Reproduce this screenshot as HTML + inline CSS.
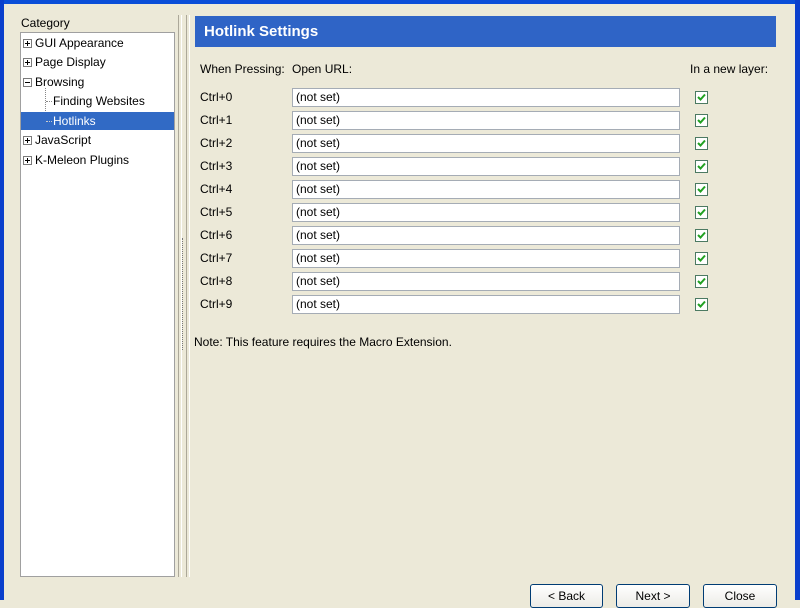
<!DOCTYPE html>
<html><head><style>
body{margin:0;width:800px;height:600px;overflow:hidden;background:#ECE9D8;font-family:"Liberation Sans",sans-serif;font-size:12px;color:#000;position:relative}
.a{position:absolute}
.inp{position:absolute;left:292px;width:388px;border:1px solid #A5ACB5;background:#fff;line-height:17px;padding-left:3px;box-sizing:border-box;height:19px;}
.cb{position:absolute;left:695px;width:13px;height:13px;border:1px solid #4C7A62;background:#fff;box-sizing:border-box}
.cb svg{position:absolute;left:1px;top:1px}
.lbl{position:absolute;left:200px}
.pm{position:absolute;left:23px;width:9px;height:9px;border:1px solid #7a7a7a;box-sizing:border-box;background:#fff}
.pm:before{content:"";position:absolute;left:1px;top:3px;width:5px;height:1px;background:#000}
.pm.p:after{content:"";position:absolute;left:3px;top:1px;width:1px;height:5px;background:#000}
.btn{position:absolute;top:584px;height:24px;border:1px solid #003C74;border-radius:3px;background:linear-gradient(#fff,#ECEBE6);text-align:center;line-height:22px;box-sizing:border-box}
</style></head><body>
<div class="a" style="left:0;top:0;width:800px;height:4px;background:#0A4ED8"></div>
<div class="a" style="left:0;top:0;width:4px;height:600px;background:#0A3FCC"></div>
<div class="a" style="left:795px;top:0;width:5px;height:600px;background:#0A3FCC"></div>
<div class="a" style="left:21px;top:16px">Category</div>
<div class="a" style="left:20px;top:32px;width:155px;height:545px;background:#fff;border:1px solid #A0A0A0;box-sizing:border-box"></div>
<div class="pm p" style="top:39px"></div><div class="a" style="left:35px;top:36px">GUI Appearance</div>
<div class="pm p" style="top:58px"></div><div class="a" style="left:35px;top:55px">Page Display</div>
<div class="pm" style="top:78px"></div><div class="a" style="left:35px;top:75px">Browsing</div>
<div class="a" style="left:45px;top:88px;width:0;height:33px;border-left:1px dotted #888"></div>
<div class="a" style="left:46px;top:101px;width:6px;border-top:1px dotted #888"></div>
<div class="a" style="left:53px;top:94px">Finding Websites</div>
<div class="a" style="left:21px;top:112px;width:153px;height:18px;background:#316AC5"></div>
<div class="a" style="left:46px;top:121px;width:6px;border-top:1px dotted #ccc"></div>
<div class="a" style="left:53px;top:114px;color:#fff">Hotlinks</div>
<div class="pm p" style="top:136px"></div><div class="a" style="left:35px;top:133px">JavaScript</div>
<div class="pm p" style="top:156px"></div><div class="a" style="left:35px;top:153px">K-Meleon Plugins</div>
<div class="a" style="left:178px;top:15px;width:2px;height:562px;border-left:1px solid #aca899;border-right:1px solid #fff"></div>
<div class="a" style="left:186px;top:15px;width:2px;height:562px;border-left:1px solid #aca899;border-right:1px solid #fff"></div>
<div class="a" style="left:182px;top:238px;width:0;height:112px;border-left:1px dotted #777"></div>
<div class="a" style="left:195px;top:16px;width:581px;height:31px;background:#2F64C6;color:#fff;font-size:15px;font-weight:bold;line-height:31px;padding-left:9px;box-sizing:border-box">Hotlink Settings</div>
<div class="a" style="left:200px;top:62px">When Pressing:</div>
<div class="a" style="left:292px;top:62px">Open URL:</div>
<div class="a" style="left:690px;top:62px">In a new layer:</div>
<div class="lbl" style="top:90px">Ctrl+0</div><div class="inp" style="top:88px">(not set)</div><div class="cb" style="top:91px"><svg width="9" height="9"><path d="M1 4l2.5 2.5L8 1.5" stroke="#21A121" stroke-width="2" fill="none"/></svg></div>
<div class="lbl" style="top:113px">Ctrl+1</div><div class="inp" style="top:111px">(not set)</div><div class="cb" style="top:114px"><svg width="9" height="9"><path d="M1 4l2.5 2.5L8 1.5" stroke="#21A121" stroke-width="2" fill="none"/></svg></div>
<div class="lbl" style="top:136px">Ctrl+2</div><div class="inp" style="top:134px">(not set)</div><div class="cb" style="top:137px"><svg width="9" height="9"><path d="M1 4l2.5 2.5L8 1.5" stroke="#21A121" stroke-width="2" fill="none"/></svg></div>
<div class="lbl" style="top:159px">Ctrl+3</div><div class="inp" style="top:157px">(not set)</div><div class="cb" style="top:160px"><svg width="9" height="9"><path d="M1 4l2.5 2.5L8 1.5" stroke="#21A121" stroke-width="2" fill="none"/></svg></div>
<div class="lbl" style="top:182px">Ctrl+4</div><div class="inp" style="top:180px">(not set)</div><div class="cb" style="top:183px"><svg width="9" height="9"><path d="M1 4l2.5 2.5L8 1.5" stroke="#21A121" stroke-width="2" fill="none"/></svg></div>
<div class="lbl" style="top:205px">Ctrl+5</div><div class="inp" style="top:203px">(not set)</div><div class="cb" style="top:206px"><svg width="9" height="9"><path d="M1 4l2.5 2.5L8 1.5" stroke="#21A121" stroke-width="2" fill="none"/></svg></div>
<div class="lbl" style="top:228px">Ctrl+6</div><div class="inp" style="top:226px">(not set)</div><div class="cb" style="top:229px"><svg width="9" height="9"><path d="M1 4l2.5 2.5L8 1.5" stroke="#21A121" stroke-width="2" fill="none"/></svg></div>
<div class="lbl" style="top:251px">Ctrl+7</div><div class="inp" style="top:249px">(not set)</div><div class="cb" style="top:252px"><svg width="9" height="9"><path d="M1 4l2.5 2.5L8 1.5" stroke="#21A121" stroke-width="2" fill="none"/></svg></div>
<div class="lbl" style="top:274px">Ctrl+8</div><div class="inp" style="top:272px">(not set)</div><div class="cb" style="top:275px"><svg width="9" height="9"><path d="M1 4l2.5 2.5L8 1.5" stroke="#21A121" stroke-width="2" fill="none"/></svg></div>
<div class="lbl" style="top:297px">Ctrl+9</div><div class="inp" style="top:295px">(not set)</div><div class="cb" style="top:298px"><svg width="9" height="9"><path d="M1 4l2.5 2.5L8 1.5" stroke="#21A121" stroke-width="2" fill="none"/></svg></div>
<div class="a" style="left:194px;top:335px">Note: This feature requires the Macro Extension.</div>
<div class="btn" style="left:530px;width:73px">&lt; Back</div>
<div class="btn" style="left:616px;width:74px">Next &gt;</div>
<div class="btn" style="left:703px;width:74px">Close</div>
</body></html>
